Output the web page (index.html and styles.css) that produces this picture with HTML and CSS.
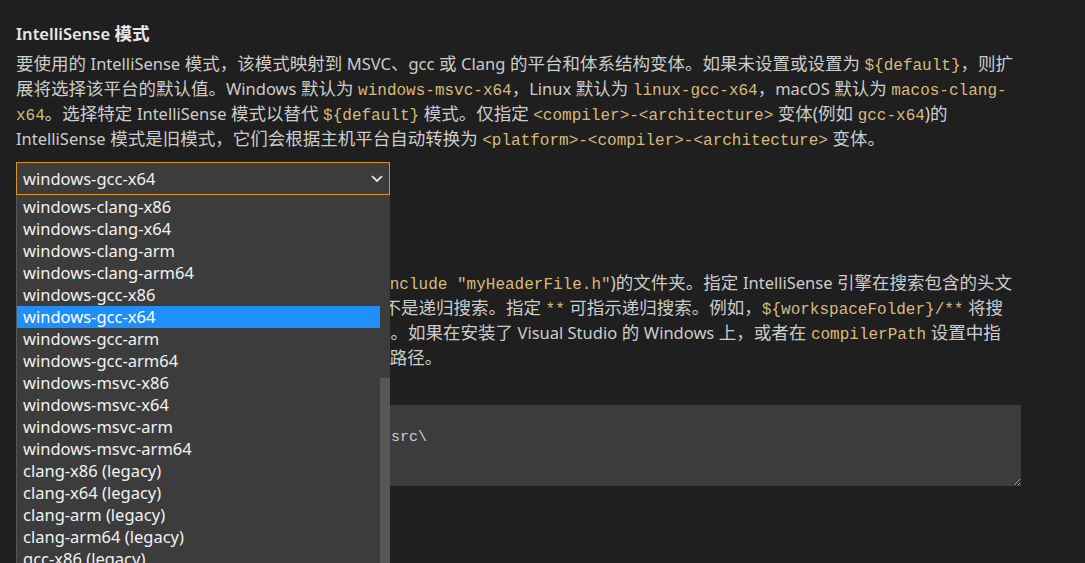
FILE: index.html
```html
<!DOCTYPE html>
<html lang="zh-CN">
<head>
<meta charset="utf-8">
<title>IntelliSense 模式</title>
<link rel="stylesheet" href="styles.css">
</head>
<body>
<div class="page">
  <section class="setting">
    <div class="setting-title"><span class="en">IntelliSense</span> 模式</div>
    <div class="setting-desc">
      <div class="line">要使用的 <span class="en">IntelliSense</span> 模式，该模式映射到 <span class="en">MSVC</span>、<span class="en">gcc</span> 或 <span class="en">Clang</span> 的平台和体系结构变体。如果未设置或设置为 <code>${default}</code>，则扩</div>
      <div class="line">展将选择该平台的默认值。<span class="en">Windows</span> 默认为 <code>windows-msvc-x64</code>，<span class="en">Linux</span> 默认为 <code>linux-gcc-x64</code>，<span class="en">macOS</span> 默认为 <code>macos-clang-</code></div>
      <div class="line"><code>x64</code>。选择特定 <span class="en">IntelliSense</span> 模式以替代 <code>${default}</code> 模式。仅指定 <code>&lt;compiler&gt;-&lt;architecture&gt;</code> 变体(例如 <code>gcc-x64</code>)的</div>
      <div class="line"><span class="en">IntelliSense</span> 模式是旧模式，它们会根据主机平台自动转换为 <code>&lt;platform&gt;-&lt;compiler&gt;-&lt;architecture&gt;</code> 变体。</div>
    </div>
    <div class="select-wrap">
      <div class="select">
        <span class="select-value">windows-gcc-x64</span>
        <svg class="chevron" width="12" height="8" viewBox="0 0 12 8"><polyline points="1,1.2 6,6 11,1.2" fill="none" stroke="#e6e6e6" stroke-width="1.8"/></svg>
      </div>
      <div class="dropdown">
        <ul class="options">
          <li>windows-clang-x86</li>
          <li>windows-clang-x64</li>
          <li>windows-clang-arm</li>
          <li>windows-clang-arm64</li>
          <li>windows-gcc-x86</li>
          <li class="selected">windows-gcc-x64</li>
          <li>windows-gcc-arm</li>
          <li>windows-gcc-arm64</li>
          <li>windows-msvc-x86</li>
          <li>windows-msvc-x64</li>
          <li>windows-msvc-arm</li>
          <li>windows-msvc-arm64</li>
          <li>clang-x86 (legacy)</li>
          <li>clang-x64 (legacy)</li>
          <li>clang-arm (legacy)</li>
          <li>clang-arm64 (legacy)</li>
          <li>gcc-x86 (legacy)</li>
          <li>gcc-x64 (legacy)</li>
          <li>gcc-arm (legacy)</li>
        </ul>
        <div class="scrollbar"><div class="thumb"></div></div>
      </div>
    </div>
  </section>

  <section class="setting setting-include">
    <div class="setting-title">包含路径</div>
    <div class="setting-desc desc-tight">
      <div class="line">包含路径是包含源文件中包括的头文件（例如 <code>#include "myHeaderFile.h"</code>)的文件夹。指定 <span class="en">IntelliSense</span> 引擎在搜索包含的头文</div>
      <div class="line">件时要使用的路径列表。对这些路径进行的搜索不是递归搜索。指定 <code>**</code> 可指示递归搜索。例如，<code>${workspaceFolder}/**</code> 将搜</div>
      <div class="line">索所有子目录，而 <code>${workspaceFolder}</code> 则不会。如果在安装了 <span class="en">Visual Studio</span> 的 <span class="en">Windows</span> 上，或者在 <code>compilerPath</code> 设置中指</div>
      <div class="line">定了编译器，则无需在列表中列出系统 <code>include</code> 路径。</div>
    </div>
    <textarea class="paths" spellcheck="false">${workspaceFolder}/**
C:\Users\Administrator\Documents\project\src\</textarea>
  </section>

  <section class="setting setting-defines">
    <div class="setting-title">定义</div>
  </section>
</div>
</body>
</html>
```

FILE: styles.css
```css
html, body {
  margin: 0;
  padding: 0;
  background: #1f1f1f;
  overflow: hidden;
  height: 100%;
}

body {
  font-family: "Noto Sans", "Noto Sans CJK SC", sans-serif;
  font-size: 17.5px;
  color: #cccccc;
}

.en {
  font-size: 16.5px;
}

.page {
  padding: 21px 16px 0 16px;
}

.setting-title {
  font-weight: 600;
  color: #e7e7e7;
  height: 25px;
  line-height: 25px;
  white-space: nowrap;
}

.setting-desc {
  margin-top: 5px;
}

.desc-tight {
  margin-top: 7px;
}

.line {
  height: 25px;
  line-height: 25px;
  white-space: nowrap;
}

code {
  font-family: "Liberation Mono", "DejaVu Sans Mono", monospace;
  font-size: 16px;
  line-height: 1;
  color: #d7ba7d;
}

.select-wrap {
  position: relative;
  width: 374px;
  margin-top: 11px;
}

.select {
  box-sizing: border-box;
  height: 33px;
  border: 1px solid #d9921a;
  background: #3c3c3c;
  display: flex;
  align-items: center;
  justify-content: space-between;
  padding: 0 6px 0 6px;
  color: #f0f0f0;
  font-size: 16.5px;
}

.select-value {
  line-height: 31px;
}

.chevron {
  display: block;
}

.dropdown {
  position: absolute;
  top: 33px;
  left: 0;
  width: 374px;
  height: 380px;
  box-sizing: border-box;
  border-left: 1px solid #575757;
  background: #3c3c3c;
  display: flex;
  overflow: hidden;
  z-index: 10;
}

.options {
  list-style: none;
  margin: 1px 0 0 0;
  padding: 0;
  flex: 1;
  font-size: 16.5px;
}

.options li {
  height: 22px;
  line-height: 22px;
  padding-left: 6px;
  color: #f2f2f2;
  white-space: nowrap;
}

.options li.selected {
  background: #1f8ffc;
  color: #ffffff;
}

.scrollbar {
  width: 10px;
  padding-top: 183px;
  box-sizing: border-box;
}

.thumb {
  height: 400px;
  background: #575757;
}

.setting-include {
  margin-top: 43px;
}

.paths {
  display: block;
  box-sizing: border-box;
  width: 1005px;
  height: 81px;
  margin: 35px 0 0 0;
  border: none;
  outline: none;
  background: #3c3c3c;
  color: #cccccc;
  font-family: "Liberation Mono", "DejaVu Sans Mono", monospace;
  font-size: 15px;
  line-height: 19px;
  padding: 4px 6px;
  resize: vertical;
  overflow: hidden;
}

.setting-defines {
  margin-top: 36px;
}
```
